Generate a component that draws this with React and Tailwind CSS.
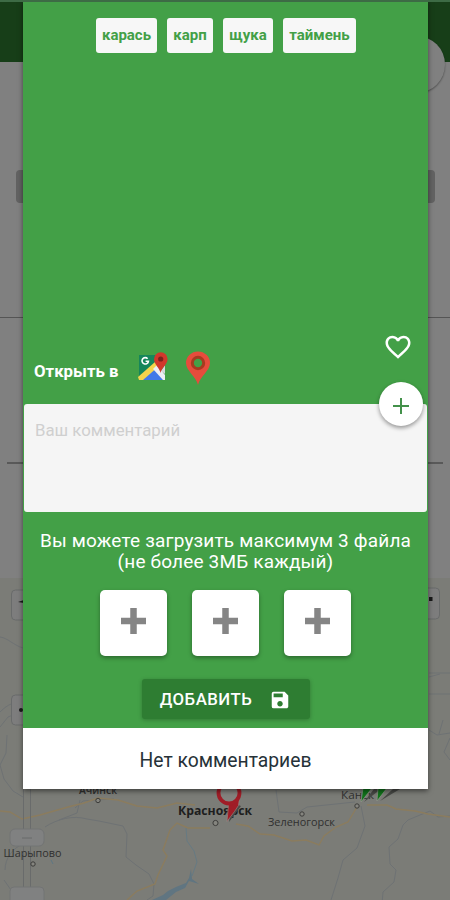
import React from 'react';

const fishes = [
  { name: 'карась', width: 'w-[61px]' },
  { name: 'карп', width: 'w-[46px]' },
  { name: 'щука', width: 'w-[50px]' },
  { name: 'таймень', width: 'w-[73px]' },
];

const files = [1, 2, 3];

const GoogleMapsIcon = () => (
  <svg className="w-[30px] h-[30px]" viewBox="0 0 30 30" fill="none">
    <path d="M1 4h19l2 3-9 10L1 27z" fill="#16865a" />
    <path d="M3 29l12-12 11 12z" fill="#4179e8" />
    <path d="M0 26L17 11l4 4L5 29H1z" fill="#f4d44c" />
    <path d="M15 18l4-4 8 10v5h-2z" fill="#eceff5" />
    <path d="M23 20l4-6v9z" fill="#d5d8dc" />
    <path d="M9.600 7.700a3.200 3.200 0 1 0 .8 2.600H7.600" stroke="#fff" strokeWidth="1.600" />
    <path d="M22.500 22c-.8-5-6.500-8.600-6.500-14a6.800 6.800 0 0 1 13.600 0c0 5.400-6.300 9-7.100 14z" fill="#d0382c" />
    <circle cx="22.700" cy="8" r="2.600" fill="#7c211c" />
  </svg>
);

const PinIcon = () => (
  <svg className="w-[24px] h-[34px]" viewBox="0 0 24 34">
    <path d="M12 34C10 25 0 20 0 12a12 11.500 0 0 1 24 0c0 8-10 13-12 22z" fill="#e64c3c" />
    <circle cx="12" cy="12" r="5.700" fill="#43a047" stroke="#a83a20" strokeWidth="3" />
  </svg>
);

const HeartIcon = () => (
  <svg className="w-[30px] h-[30px]" viewBox="0 0 24 24" fill="#fff">
    <path d="M16.500 3c-1.740 0-3.410.810-4.500 2.090C10.910 3.810 9.240 3 7.500 3 4.420 3 2 5.420 2 8.500c0 3.780 3.400 6.860 8.550 11.540L12 21.350l1.450-1.320C18.600 15.360 22 12.280 22 8.500 22 5.420 19.580 3 16.500 3zm-4.400 15.550l-.1.100-.1-.1C7.140 14.240 4 11.390 4 8.500 4 6.500 5.500 5 7.500 5c1.540 0 3.040.990 3.570 2.360h1.870C13.460 5.990 14.960 5 16.500 5c2 0 3.500 1.500 3.500 3.500 0 2.890-3.140 5.740-7.900 10.050z" />
  </svg>
);

const SaveIcon = () => (
  <svg className="w-[22px] h-[22px]" viewBox="0 0 24 24" fill="#fff">
    <path d="M17 3H5a2 2 0 0 0-2 2v14a2 2 0 0 0 2 2h14c1.100 0 2-.9 2-2V7l-4-4zm-5 16c-1.660 0-3-1.340-3-3s1.340-3 3-3 3 1.340 3 3-1.340 3-3 3zm3-10H5V5h10v4z" />
  </svg>
);

const MapView = () => (
  <svg className="block w-full h-[322px] shrink-0" viewBox="0 578 450 322" fill="none" fontFamily='"Open Sans", sans-serif'>
    <rect y="578" width="450" height="322" fill="#7b7c77" />
    {/* rivers and borders */}
    <g stroke="#6e7274" strokeWidth="1">
      <path d="M0 637c8 1 13 8 23 11M0 712c8-8 15-11 24-9M0 727l8-10 15-6M429 694h21M440 674l-11 3M429 673h21" />
      <path d="M7 735l-1 18-6 12 4 14 9 12 10 6M5 870c0-12 8-22 18-26M4 880l7 10M439 734l4-14M429 730l8 5 13-2M450 738l-6 14 6 8" />
      <path d="M45 827c12-8 28-12 42-8l12 2 24 5 4 8-1 23 10 8 13 9 5 10-1 12-6 4 M75 808l8-7 13-1 18-1M80 800l-3 13-18 7" />
      <path d="M276 790l3 22 18 1 10-6 48-5M361 806l4 20-8 22-14 12-5 18-7 22M450 816l-12 1-8-6-10 4-12 5-5 5-5 14-9 8 1 17 6 6-2 12-11 10-1 12" />
      <path d="M186 828l1 13 7 10 3 11-5 14" stroke="#667a83" />
    </g>
    <path d="M191 869l-2 9-3 5-10 4-8 4-5 4-11 5h14l10-8 9-4 4-7 10 3-7-5z" fill="#607581" />
    <path d="M51 860l2 4" stroke="#5d7784" />
    {/* roads */}
    <g stroke="#8b7c5e" strokeWidth="1.400">
      <path d="M0 811l10 1 12 7 18-4 28-8 16-4 14-5 20 2 19 6 20 2 20-5 18 2M236 824l12 2 12 8 14 1 18 6 14-1 13 5 5-9 12-9 12-5 9-15" />
      <path d="M210 828l-22 0-11-5-7 7-7 20 4 6-9 19-3 9-18 7-10 9M367 805l20 0 9 4 19 2 13 3 22 3" />
    </g>
    {/* zoom slider */}
    <g stroke="#696b6b">
      <path d="M23.500 720v167M30.500 720v167" />
      <rect x="10" y="829" width="34" height="17" rx="5" fill="#808181" stroke="#727474" />
      <path d="M22 838h10" />
      <path d="M10 900v-9q0-4 4-4h26q4 0 4 4v9" fill="#808181" stroke="#727474" />
      <rect x="11.500" y="590" width="30" height="30" rx="4" fill="#7d7d7d" />
      <rect x="11.500" y="695" width="30" height="30" rx="4" fill="#7d7d7d" />
      <rect x="408" y="588" width="31.500" height="31" rx="4" fill="#7d7d7d" />
    </g>
    <path d="M18 602l6-2v3zM429 597h3.500v4H429z" fill="#191919" />
    <circle cx="21" cy="710" r="2" fill="#191919" />
    <g stroke="#3c3c3a" fill="#85857f">
      <circle cx="98" cy="800.500" r="2.200" />
      <circle cx="215.500" cy="823" r="2.600" />
      <circle cx="302" cy="814" r="2.200" />
      <circle cx="33" cy="864" r="2.200" />
      <circle cx="357" cy="806" r="2.200" />
    </g>
    <g fill="#30302f" fontSize="11.500">
      <text x="79" y="793.500" textLength="38" lengthAdjust="spacingAndGlyphs" fontWeight="600">Ачинск</text>
      <text x="178" y="815" textLength="74" lengthAdjust="spacingAndGlyphs" fontWeight="700" fill="#1e1e1e">Красноярск</text>
      <text x="268" y="825.500" textLength="67" lengthAdjust="spacingAndGlyphs" fontWeight="500">Зеленогорск</text>
      <text x="3.500" y="856.500" textLength="58" lengthAdjust="spacingAndGlyphs">Шарыпово</text>
      <text x="341" y="799" textLength="33" lengthAdjust="spacingAndGlyphs">Канск</text>
    </g>
    <path d="M229 822l12-16-3-1-8 10zM364 802l17-13h-7zM380 801l20-12h-7z" fill="#494a47" />
    {/* map markers */}
    <path d="M227 821.500l1.500-17 11-7-1 8-4 6z" fill="#a01d27" stroke="#9a8a86" strokeWidth=".6" />
    <circle cx="229" cy="793" r="10.500" fill="#83837f" stroke="#a01d27" strokeWidth="3.800" />
    <path d="M361 802l2-14h9zM377 801l1-13h9z" fill="#11721b" stroke="#9a9a94" strokeWidth=".6" />
  </svg>
);

const Backdrop = () => (
  <div className="flex flex-col w-full h-full bg-[#808080]">
    <div className="h-[62px] shrink-0 bg-[#173e18] relative">
      <div className="absolute left-[388px] top-[36px] w-[57px] h-[57px] rounded-full bg-[#808080] shadow-[0_1px_2px_rgba(0,0,0,0.4)]" />
    </div>
    <div className="mt-[108px] mx-4 mr-[15px] h-[33px] shrink-0 rounded-sm bg-[#626262]" />
    <div className="mt-[114px] h-px shrink-0 bg-[#555]" />
    <div className="mt-[144px] mx-[7px] h-[2px] shrink-0 bg-[#595959]" />
    <div className="mt-[114px]">
      <MapView />
    </div>
  </div>
);

const Dialog = () => (
  <div className="absolute top-0 left-[23px] w-[405px] h-[789px] flex flex-col bg-[#43a047] shadow-[0_2px_5px_rgba(0,0,0,0.5)]">
    <div className="flex justify-center gap-[10px] pt-[18px] pl-[1px]">
      {fishes.map((fish) => (
        <span
          key={fish.name}
          className={`${fish.width} h-[35px] shrink-0 flex items-center justify-center rounded-[3px] bg-[#f7f7f7] text-[15px] font-bold text-[#43a047]`}
        >
          {fish.name}
        </span>
      ))}
    </div>

    <div className="mt-[279px] h-[72px] shrink-0 flex justify-between">
      <div className="flex items-start pl-[11px] pt-[19px]">
        <span className="w-[85px] pt-[9px] text-[16.800px] leading-[22px] font-bold text-white whitespace-nowrap">Открыть в</span>
        <span className="ml-[19px]"><GoogleMapsIcon /></span>
        <span className="ml-[18px]"><PinIcon /></span>
      </div>
      <div className="w-[58px] relative">
        <div className="ml-[13px]"><HeartIcon /></div>
        <button className="absolute left-[9px] top-[50px] w-[44px] h-[44px] rounded-full bg-white flex items-center justify-center shadow-[0_2px_4px_rgba(0,0,0,0.4)]">
          <svg className="w-4 h-4 mt-[3px]" viewBox="0 0 16 16" stroke="#43914a" strokeWidth="2">
            <path d="M8 0v16M0 8h16" />
          </svg>
        </button>
      </div>
    </div>

    <div className="h-[108px] shrink-0 mr-px ml-px rounded-[3px] bg-[#f5f5f5] pl-[11px] pt-[14px] text-[16.800px] leading-[24px] text-[#cfcfcf]">
      Ваш комментарий
    </div>

    <div className="flex flex-col items-center text-white">
      <p className="pt-[18px] text-[19px] leading-[21px] tracking-[0.170px] text-center whitespace-nowrap">
        Вы можете загрузить максимум 3 файла<br />
        (не более 3МБ каждый)
      </p>
      <div className="flex gap-[25px] mt-[18px]">
        {files.map((file) => (
          <button key={file} className="w-[67px] h-[66px] rounded-[5px] bg-white flex items-center justify-center shadow-[0_2px_4px_rgba(0,0,0,0.35)]">
            <svg className="w-[25px] h-[26px] mb-1" viewBox="0 0 25 26" stroke="#858585" strokeWidth="6.500">
              <path d="M12.500 0v26M0 13h25" />
            </svg>
          </button>
        ))}
      </div>
      <button className="mt-[23px] w-[168px] h-[40px] rounded-[3px] bg-[#2e7d32] flex items-center pl-[18px] shadow-[0_1px_4px_rgba(0,0,0,0.25)]">
        <span className="w-[93px] pt-[2px] text-[16.800px] font-medium tracking-[0.500px] whitespace-nowrap">ДОБАВИТЬ</span>
        <span className="ml-[16px] mt-[2px]"><SaveIcon /></span>
      </button>
    </div>

    <div className="mt-auto h-[61px] shrink-0 bg-white flex items-center justify-center pt-[5px] text-[19.300px] text-[#263238]">
      Нет комментариев
    </div>
  </div>
);

export default function App() {
  return (
    <div className="relative w-[450px] h-[900px] overflow-hidden font-['Roboto',sans-serif]">
      <Backdrop />
      <Dialog />
      <div className="absolute top-0 left-0 w-full h-[2px] bg-[#3d6b45]" />
    </div>
  );
}
